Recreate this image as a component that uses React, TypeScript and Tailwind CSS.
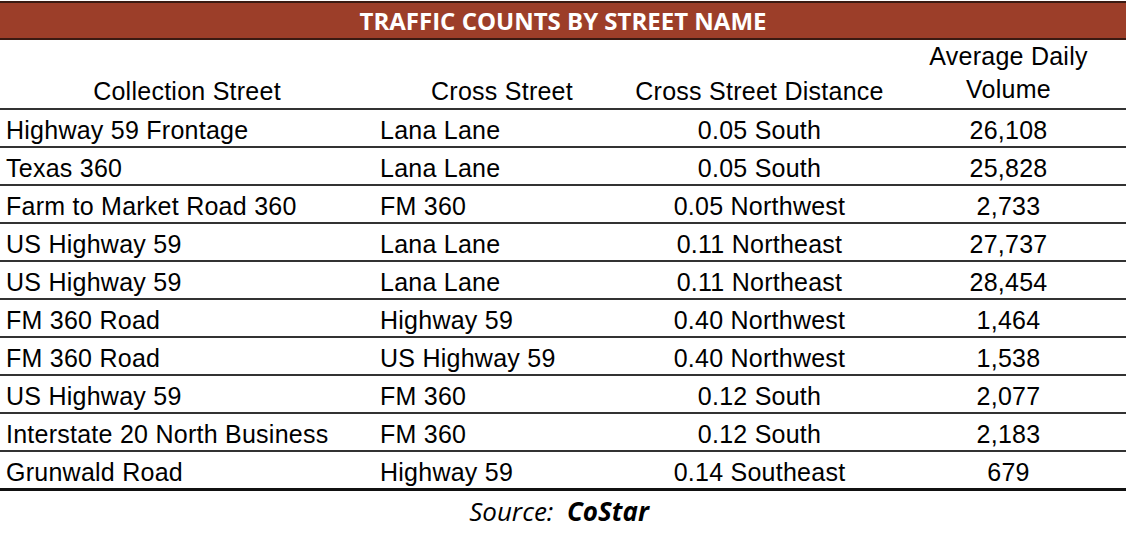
const rows: [string, string, string, string][] = [
  ["Highway 59 Frontage", "Lana Lane", "0.05 South", "26,108"],
  ["Texas 360", "Lana Lane", "0.05 South", "25,828"],
  ["Farm to Market Road 360", "FM 360", "0.05 Northwest", "2,733"],
  ["US Highway 59", "Lana Lane", "0.11 Northeast", "27,737"],
  ["US Highway 59", "Lana Lane", "0.11 Northeast", "28,454"],
  ["FM 360 Road", "Highway 59", "0.40 Northwest", "1,464"],
  ["FM 360 Road", "US Highway 59", "0.40 Northwest", "1,538"],
  ["US Highway 59", "FM 360", "0.12 South", "2,077"],
  ["Interstate 20 North Business", "FM 360", "0.12 South", "2,183"],
  ["Grunwald Road", "Highway 59", "0.14 Southeast", "679"],
];

export default function App() {
  return (
    <main className="w-[1128px] h-[540px] bg-white overflow-hidden">
      <div className="w-[1126px] pt-px">
        <div className="h-[39px] bg-[#9c3e29] border-y-2 border-[#3a1a12] flex items-center justify-center">
          <h1 className="text-white font-bold text-[24px] leading-none font-['Open_Sans',sans-serif]">
            TRAFFIC COUNTS BY STREET NAME
          </h1>
        </div>

        <table className="w-full table-fixed border-collapse text-[25px] tracking-[0.25px] text-black font-['Liberation_Sans',Arial,sans-serif]">
          <colgroup>
            <col className="w-[374px]" />
            <col className="w-[256px]" />
            <col className="w-[255px]" />
            <col />
          </colgroup>
          <thead>
            <tr className="h-[68px] border-b-2 border-[#333]">
              <th className="font-normal text-center align-bottom leading-[33px]">Collection Street</th>
              <th className="font-normal text-center align-bottom leading-[33px]">Cross Street</th>
              <th className="font-normal text-center align-bottom leading-[33px] pl-[4px]">Cross Street Distance</th>
              <th className="font-normal text-center align-bottom leading-[33px] pl-[6px] pb-[2px]">
                Average Daily
                <br />
                Volume
              </th>
            </tr>
          </thead>
          <tbody>
            {rows.map((r, i) => (
              <tr
                key={i}
                className={`h-[38px] ${i === rows.length - 1 ? "border-b-[3px] border-[#111]" : "border-b-2 border-[#333]"}`}
              >
                <td className="pl-[6px] pt-[5px] leading-none whitespace-nowrap">{r[0]}</td>
                <td className="pl-[6px] pt-[5px] leading-none whitespace-nowrap">{r[1]}</td>
                <td className="pl-[4px] pt-[5px] text-center leading-none whitespace-nowrap">{r[2]}</td>
                <td className="pl-[6px] pt-[5px] text-center leading-none whitespace-nowrap">{r[3]}</td>
              </tr>
            ))}
          </tbody>
        </table>

        <p className="mt-[3px] pr-[8px] text-center text-[26px] leading-[34px] italic text-black font-['Open_Sans',sans-serif]">
          Source:&nbsp; <span className="font-bold">CoStar</span>
        </p>
      </div>
    </main>
  );
}
